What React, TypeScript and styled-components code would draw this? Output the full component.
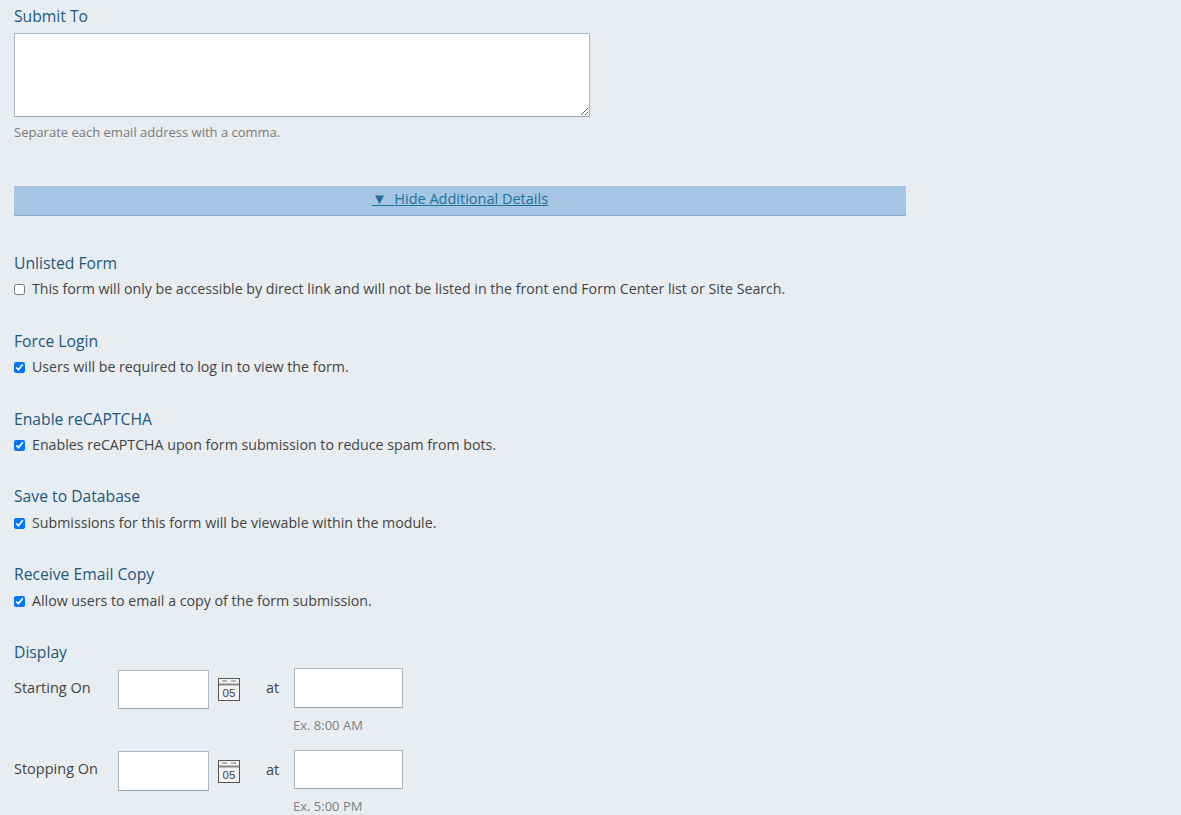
import React from "react";
import styled, { createGlobalStyle } from "styled-components";

const GlobalStyle = createGlobalStyle`
	html, body {
		margin: 0;
		padding: 0;
		height: 100%;
		overflow: hidden;
		background: #e8edf1;
		font-family: "Open Sans", "Liberation Sans", sans-serif;
	}
`;

const options = [
	{ title: "Unlisted Form", text: "This form will only be accessible by direct link and will not be listed in the front end Form Center list or Site Search.", checked: false },
	{ title: "Force Login", text: "Users will be required to log in to view the form.", checked: true },
	{ title: "Enable reCAPTCHA", text: "Enables reCAPTCHA upon form submission to reduce spam from bots.", checked: true },
	{ title: "Save to Database", text: "Submissions for this form will be viewable within the module.", checked: true },
	{ title: "Receive Email Copy", text: "Allow users to email a copy of the form submission.", checked: true },
];

const CalendarIcon = () => (
	<svg width="23" height="24" viewBox="0 0 23 24" fill="none">
		<rect x="0.5" y="0.5" width="21" height="22" fill="#f2f3f4" stroke="#555" />
		<rect x="1" y="5.5" width="20" height="2" fill="#8a8a8a" />
		<path d="M4 3h5M13 3h5" stroke="#777" />
		<text x="11" y="18.5" textAnchor="middle" fontSize="11.5" fontFamily="Liberation Sans, sans-serif" fill="#444">05</text>
	</svg>
);

const App = () => {
	return (
		<Page>
			<GlobalStyle />
			<Title>Submit To</Title>
			<EmailBox />
			<Hint>Separate each email address with a comma.</Hint>
			<DetailsBar>
				<DetailsLink href="#">
					<Arrow>▼</Arrow>&nbsp; Hide Additional Details
				</DetailsLink>
			</DetailsBar>
			<Options>
				{options.map((o) => (
					<Option key={o.title}>
						<Title>{o.title}</Title>
						<CheckRow>
							<Check type="checkbox" defaultChecked={o.checked} />
							<span>{o.text}</span>
						</CheckRow>
					</Option>
				))}
			</Options>
			<Title>Display</Title>
			<DateRow>
				<DateLabel>Starting On</DateLabel>
				<DateInput />
				<IconSlot><CalendarIcon /></IconSlot>
				<At>at</At>
				<TimeField>
					<TimeInput />
					<TimeHint>Ex. 8:00 AM</TimeHint>
				</TimeField>
			</DateRow>
			<DateRow $stop>
				<DateLabel $stop>Stopping On</DateLabel>
				<DateInput $stop />
				<IconSlot><CalendarIcon /></IconSlot>
				<At>at</At>
				<TimeField>
					<TimeInput $stop />
					<TimeHint>Ex. 5:00 PM</TimeHint>
				</TimeField>
			</DateRow>
		</Page>
	);
};

const Page = styled.div`
	padding: 6px 14px 0;
	width: 1153px;
	height: 809px;
	overflow: hidden;
	color: #444;
`;

const Title = styled.div`
	font-size: 15.7px;
	line-height: 21px;
	color: #22577e;
`;

const EmailBox = styled.textarea`
	display: block;
	box-sizing: border-box;
	width: 576px;
	height: 84px;
	margin: 6px 0 0;
	background: #fff;
	border: 1px solid #aab8c9;
	border-bottom-color: #97a4b5;
	border-radius: 0;
	outline: none;
`;

const Hint = styled.div`
	margin-top: 6px;
	font-size: 13px;
	line-height: 18px;
	color: #7b7b7b;
`;

const DetailsBar = styled.div`
	box-sizing: border-box;
	width: 892px;
	height: 30px;
	margin-top: 45px;
	padding-bottom: 6px;
	background: #a6c5e3;
	border-bottom: 1px solid #8fa8c4;
	display: flex;
	align-items: center;
	justify-content: center;
`;

const DetailsLink = styled.a`
	font-size: 14.5px;
	color: #1c7396;
	text-decoration: underline;
`;

const Arrow = styled.span`
	font-size: 15px;
`;

const Options = styled.div`
	margin-top: 37px;
`;

const Option = styled.div`
	height: 77.8px;
`;

const CheckRow = styled.label`
	display: flex;
	align-items: center;
	margin-top: 5.4px;
	font-size: 14.2px;
	line-height: 20px;
	color: #444;
`;

const Check = styled.input`
	width: 11px;
	height: 11px;
	margin: 1.2px 7px 0 0;
	flex: none;
	accent-color: #0075ff;
`;

const DateRow = styled.div<{ $stop?: boolean }>`
	display: flex;
	align-items: flex-start;
	margin-top: ${(p) => (p.$stop ? "16px" : "5px")};
`;

const DateLabel = styled.div<{ $stop?: boolean }>`
	width: 104px;
	font-size: 14.5px;
	line-height: 20px;
	padding-top: ${(p) => (p.$stop ? "9px" : "10px")};
	color: #444;
`;

const DateInput = styled.input<{ $stop?: boolean }>`
	box-sizing: border-box;
	width: 91px;
	height: ${(p) => (p.$stop ? "40px" : "39px")};
	margin: ${(p) => (p.$stop ? "1px" : "2px")} 0 0;
	padding: 0;
	background: #fff;
	border: 1px solid #aab8c9;
	border-bottom-color: #97a4b5;
	border-radius: 0;
`;

const IconSlot = styled.div`
	width: 57px;
	padding: 10px 0 0 9px;
	box-sizing: border-box;
`;

const At = styled.div`
	width: 28px;
	font-size: 14.5px;
	line-height: 20px;
	padding-top: 10px;
	color: #444;
`;

const TimeField = styled.div`
	display: flex;
	flex-direction: column;
`;

const TimeInput = styled.input<{ $stop?: boolean }>`
	box-sizing: border-box;
	width: 109px;
	height: ${(p) => (p.$stop ? "39px" : "40px")};
	margin: 0;
	padding: 0;
	background: #fff;
	border: 1px solid #aab8c9;
	border-bottom-color: #97a4b5;
	border-radius: 0;
`;

const TimeHint = styled.div`
	margin: 8px 0 0 -1px;
	font-size: 13px;
	line-height: 18px;
	color: #7b8088;
`;

export default App;
